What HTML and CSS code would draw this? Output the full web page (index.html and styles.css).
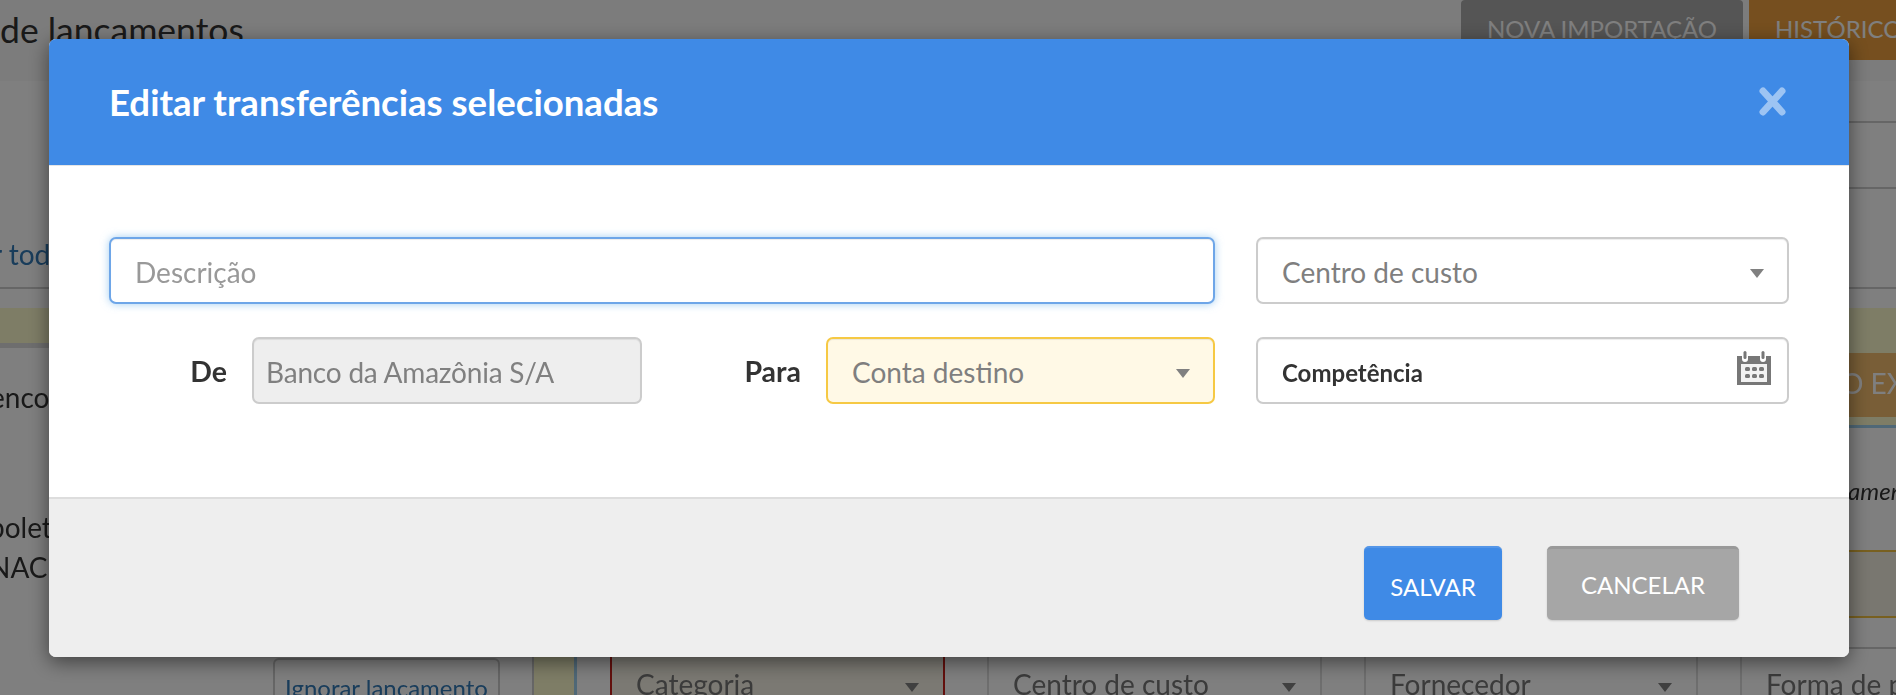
FILE: index.html
```html
<!DOCTYPE html>
<html lang="pt-BR">
<head>
  <meta charset="UTF-8" />
  <title>Editar transferências selecionadas</title>
  <link rel="stylesheet" href="styles.css">
</head>
<body>
  <div class="page">
    <header class="top">
      <h1>de lançamentos</h1>
      <div class="top-actions">
        <a class="top-btn top-btn-gray">NOVA IMPORTAÇÃO</a>
        <a class="top-btn top-btn-orange">HISTÓRICO</a>
      </div>
    </header>
    <div class="row row-filter"></div>
    <div class="row row-short"></div>
    <div class="row row-link"><a class="link">r todos</a></div>
    <div class="spacer"></div>
    <div class="band"></div>

    <section class="entry">
      <div class="entry-left">
        <div class="entry-bar"></div>
        <p class="entry-name">enco</p>
        <p class="entry-desc">bolet<br />NAC</p>
      </div>
      <div class="entry-right">
        <div class="entry-head"><a class="export">O EX</a></div>
        <p class="entry-note">amen</p>
        <div class="entry-gold"></div>
      </div>
    </section>

    <div class="filters">
      <a class="ignore">Ignorar lançamento</a>
      <div class="marker"></div>
      <div class="pick pick-red">Categoria<span class="caret"></span></div>
      <div class="pick pick-cost">Centro de custo<span class="caret"></span></div>
      <div class="pick pick-supplier">Fornecedor<span class="caret"></span></div>
      <div class="pick pick-pay">Forma de pagamento</div>
    </div>
  </div>

  <div class="overlay">
    <div class="modal">
      <div class="modal-header">
        <h2>Editar transferências selecionadas</h2>
        <svg class="close" viewBox="0 0 27 29" width="27" height="29">
          <path d="M4 4 L23 25 M23 4 L4 25" />
        </svg>
      </div>

      <div class="modal-body">
        <div class="form-grid">
          <input class="input input-focus" type="text" placeholder="Descrição" />
          <div class="input select">Centro de custo<span class="caret"></span></div>

          <div class="pair">
            <div class="field">
              <label>De</label>
              <input class="input input-off" type="text" value="Banco da Amazônia S/A" disabled />
            </div>
            <div class="field">
              <label>Para</label>
              <div class="input select select-warn">Conta destino<span class="caret"></span></div>
            </div>
          </div>
          <div class="input date">
            <span>Competência</span>
            <svg class="calendar" viewBox="0 0 34 34" width="34" height="34">
              <path class="cal-body" d="M0 5 H5 V8 A3 3 0 0 0 11 8 V5 H23 V8 A3 3 0 0 0 29 8 V5 H34 V34 H0 Z" />
              <rect class="cal-ring" x="6.5" y="0" width="3" height="8" rx="1.5" />
              <rect class="cal-ring" x="24.5" y="0" width="3" height="8" rx="1.5" />
              <rect class="cal-page" x="4" y="13" width="26" height="18" />
              <g class="cal-dots">
                <rect x="8" y="16" width="5" height="4" rx="1.5" />
                <rect x="15" y="16" width="5" height="4" rx="1.5" />
                <rect x="22" y="16" width="5" height="4" rx="1.5" />
                <rect x="8" y="23" width="5" height="4" rx="1.5" />
                <rect x="15" y="23" width="5" height="4" rx="1.5" />
                <rect x="22" y="23" width="5" height="4" rx="1.5" />
              </g>
            </svg>
          </div>
        </div>
      </div>

      <div class="modal-footer">
        <button class="btn btn-save">SALVAR</button>
        <button class="btn btn-cancel">CANCELAR</button>
      </div>
    </div>
  </div>
</body>
</html>
```

FILE: styles.css
```css
* {
  box-sizing: border-box;
}

body {
  margin: 0;
  font-family: "Lato", "Open Sans", sans-serif;
  color: #333;
  background: #fff;
  overflow: hidden;
}

/* page behind the dialog */
.page {
  height: 695px;
  overflow: hidden;
  display: flex;
  flex-direction: column;
  filter: blur(0.5px);
}

.top {
  height: 81px;
  flex: none;
  display: flex;
  justify-content: space-between;
  align-items: flex-start;
  background: #f9f9f9;
}

.top h1 {
  margin: 8px 0 0;
  font-size: 35.5px;
  line-height: 44px;
  font-weight: 400;
  color: #333;
}

.top-actions {
  display: flex;
  gap: 6px;
  width: 435px;
  flex: none;
}

.top-btn {
  height: 60px;
  padding: 14px 26px 0;
  font-size: 24px;
  line-height: 30px;
  color: #fff;
  white-space: nowrap;
}

.top-btn-gray {
  width: 282px;
  flex: none;
  background: #aaa;
  border-radius: 4px 4px 0 0;
}

.top-btn-orange {
  flex: 1;
  background: #ec9f3e;
  overflow: hidden;
}

.row {
  flex: none;
  border-bottom: 2px solid #ccc;
}

.row-filter {
  height: 42px;
  margin-left: 1500px;
}

.row-short {
  height: 66px;
  margin-left: 1500px;
}

.row-link {
  height: 100px;
  display: flex;
  align-items: flex-end;
  padding-bottom: 15px;
  margin-left: -8px;
}

.link {
  font-size: 28px;
  line-height: 36px;
  color: #337ab7;
}

.spacer {
  height: 19px;
  flex: none;
}

.band {
  height: 35px;
  flex: none;
  background: #fdfbcd;
}

.entry {
  height: 306px;
  flex: none;
  display: flex;
  justify-content: space-between;
}

.entry-left {
  width: 300px;
  font-size: 28px;
  line-height: 40px;
}

.entry-bar {
  height: 5px;
  background: #ddd;
}

.entry-name {
  margin: 29px 0 0 -10px;
}

.entry-desc {
  margin: 90px 0 0 -11px;
}

.entry-right {
  width: 300px;
  display: flex;
  flex-direction: column;
  border-bottom: 2px solid #ccc;
}

.entry-head {
  height: 85px;
  flex: none;
  padding-top: 10px;
  background: #fdfbcd;
  border-bottom: 3px solid #9fd0ee;
}

.export {
  display: block;
  height: 64px;
  padding: 12px 0 0 245px;
  font-size: 28px;
  line-height: 36px;
  color: #fff;
  white-space: nowrap;
  background: #f2bd6e;
}

.entry-note {
  margin: 48px 0 0 252px;
  font-size: 24px;
  line-height: 30px;
  font-style: italic;
  white-space: nowrap;
}

.entry-gold {
  height: 68px;
  margin-top: 44px;
  flex: none;
  background: #f2eee0;
  border-top: 2px solid #f0c040;
  border-bottom: 2px solid #f0c040;
}

.filters {
  height: 46px;
  flex: none;
  display: flex;
  padding-left: 273px;
}

.ignore {
  width: 227px;
  height: 60px;
  margin-top: 9px;
  flex: none;
  text-align: center;
  font-size: 24px;
  line-height: 56px;
  color: #337ab7;
  white-space: nowrap;
  border: 2px solid #ccc;
  border-radius: 6px;
}

.marker {
  width: 45px;
  margin-left: 32px;
  flex: none;
  background: #fdfbcd;
  border-left: 2px solid #ccc;
  border-right: 3px solid #9fd0ee;
}

.pick {
  position: relative;
  flex: none;
  font-size: 28px;
  line-height: 36px;
  padding: 17px 0 0 24px;
  color: #777;
  white-space: nowrap;
  border-left: 2px solid #ddd;
  border-right: 2px solid #ddd;
}

.pick-red {
  width: 335px;
  margin-left: 33px;
  background: #f7f3e6;
  border-color: #c7201a;
}

.pick-cost {
  width: 335px;
  margin-left: 42px;
}

.pick-supplier {
  width: 334px;
  margin-left: 42px;
}

.pick-pay {
  width: 300px;
  margin-left: 42px;
}

.caret {
  position: absolute;
  right: 23px;
  top: 50%;
  margin-top: -2px;
  width: 0;
  height: 0;
  border-left: 7px solid transparent;
  border-right: 7px solid transparent;
  border-top: 9px solid #808080;
}

.pick .caret {
  right: 24px;
  top: 34px;
  margin-top: 0;
}

/* dialog */
.overlay {
  position: fixed;
  inset: 0;
  padding: 39px 47px 0 49px;
  background: rgba(0, 0, 0, 0.5);
}

.modal {
  width: 1800px;
  height: 618px;
  display: flex;
  flex-direction: column;
  border-radius: 7px;
  overflow: hidden;
  background: #fff;
  box-shadow: 0 5px 20px rgba(0, 0, 0, 0.5);
}

.modal-header {
  height: 127px;
  flex: none;
  display: flex;
  justify-content: space-between;
  align-items: center;
  padding: 0 63px 1px 60px;
  background: #3f8ae6;
  border-bottom: 1px solid #e5e5e5;
}

.modal-header h2 {
  margin: 0;
  font-size: 36.6px;
  font-weight: 700;
  color: #fff;
}

.close path {
  fill: none;
  stroke: #9dc4f3;
  stroke-width: 7;
  stroke-linecap: round;
}

.modal-body {
  flex: 1;
  padding: 71px 61px 0 60px;
}

.form-grid {
  display: grid;
  grid-template-columns: 1106px 533px;
  grid-template-rows: 67px 67px;
  column-gap: 41px;
  row-gap: 33px;
}

.pair {
  display: grid;
  grid-template-columns: 533px 532px;
  column-gap: 41px;
}

.field {
  display: flex;
  align-items: center;
  gap: 25px;
}

.field label {
  width: 118px;
  flex: none;
  text-align: right;
  font-size: 28.5px;
  font-weight: 700;
  color: #333;
}

.input {
  display: block;
  width: 100%;
  height: 67px;
  min-width: 0;
  padding: 2px 24px 0;
  font-family: inherit;
  font-size: 28px;
  line-height: 63px;
  color: #7f7f7f;
  background: #fff;
  border: 2px solid #ccc;
  border-radius: 7px;
  box-shadow: inset 0 1px 1px rgba(0, 0, 0, 0.075);
  outline: none;
}

.input::placeholder {
  color: #999;
}

.input-focus {
  border-color: #6ea6e8;
  box-shadow: inset 0 1px 1px rgba(0, 0, 0, 0.075), 0 0 8px rgba(102, 175, 233, 0.6);
}

.input-off {
  padding: 2px 12px 0;
  letter-spacing: -0.2px;
  color: #808080;
  background: #eee;
  opacity: 1;
}

.select {
  position: relative;
}

.select-warn {
  background: #fff9e6;
  border-color: #f6c944;
}

.date {
  display: flex;
  justify-content: space-between;
  align-items: center;
  padding: 0 16px 0 24px;
  font-size: 24px;
  font-weight: 700;
  color: #333;
}

.date span {
  padding-top: 4px;
}

.calendar {
  margin-top: -5px;
}

.cal-body, .cal-ring, .cal-dots {
  fill: #777;
}

.cal-page {
  fill: #f2f2f2;
}

.modal-footer {
  height: 160px;
  flex: none;
  display: flex;
  justify-content: flex-end;
  gap: 45px;
  padding: 47px 110px 0 0;
  background: #eee;
  border-top: 2px solid #ddd;
}

.btn {
  height: 74px;
  padding: 0;
  font-family: inherit;
  font-size: 24px;
  color: #fff;
  border: none;
  border-radius: 5px;
}

.btn-save {
  width: 138px;
  padding-top: 4px;
  background: #3f8ae6;
  border-top: 2px solid #5496e8;
  box-shadow: 0 1px 2px rgba(0, 0, 0, 0.15);
}

.btn-cancel {
  width: 192px;
  background: #a6a6a6;
  border-top: 3px solid #999;
  box-shadow: 0 1px 2px rgba(0, 0, 0, 0.15);
}
```
